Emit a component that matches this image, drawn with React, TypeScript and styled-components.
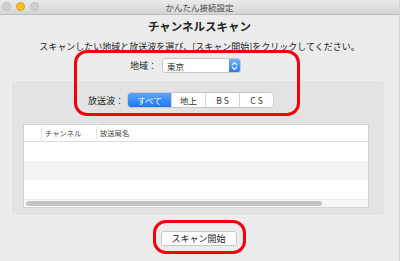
import React from "react";
import styled, { createGlobalStyle } from "styled-components";

const GlobalStyle = createGlobalStyle`
  html, body {
    margin: 0;
    padding: 0;
    background: #ececec;
    font-family: "Noto Sans CJK JP", "Noto Sans", sans-serif;
  }
`;

const waves = ["すべて", "地上", "B S", "C S"];

const App: React.FC = () => {
  return (
    <Window>
      <GlobalStyle />
      <TitleBar>
        <Lights>
          <Light />
          <Light $color="#fbbc2c" $border="#e0a21c" />
          <Light />
        </Lights>
        <WindowTitle>かんたん接続設定</WindowTitle>
      </TitleBar>
      <Heading>チャンネルスキャン</Heading>
      <Instruction>スキャンしたい地域と放送波を選び、[スキャン開始]をクリックしてください。</Instruction>
      <RegionRow>
        <Label>地域：</Label>
        <Select>
          <SelectText>東京</SelectText>
          <Stepper>
            <svg width="7" height="10" viewBox="0 0 7 10">
              <path d="M1 4 L3.5 1.5 L6 4 M1 6 L3.5 8.5 L6 6" stroke="#fff" strokeWidth="1.2" fill="none" />
            </svg>
          </Stepper>
        </Select>
      </RegionRow>
      <Panel>
        <WaveRow>
          <Label>放送波：</Label>
          <Segmented>
            {waves.map((w, i) => (
              <Segment key={w} $active={i === 0} $wide={i === 0}>
                {w}
              </Segment>
            ))}
          </Segmented>
        </WaveRow>
        <Table>
          <HeadRow>
            <HeadCell $width={17} />
            <HeadCell $width={55}>チャンネル</HeadCell>
            <HeadCell>放送局名</HeadCell>
          </HeadRow>
          <Row />
          <Row $alt />
          <Row />
          <ScrollArea>
            <Thumb />
          </ScrollArea>
        </Table>
      </Panel>
      <ButtonRow>
        <Button>スキャン開始</Button>
      </ButtonRow>
      <Mark style={{ left: 74, top: 50, width: 226, height: 66 }} />
      <Mark style={{ left: 153, top: 220, width: 93, height: 34 }} />
    </Window>
  );
};

export default App;

const Window = styled.div`
  position: relative;
  width: 400px;
  height: 261px;
  overflow: hidden;
  background: #ececec;
  display: flex;
  flex-direction: column;
  border-right: 1px solid #d6d6d6;
  box-sizing: border-box;
`;

const TitleBar = styled.div`
  height: 14px;
  position: relative;
  display: flex;
  align-items: center;
  justify-content: center;
  background: linear-gradient(#ebebeb, #d5d5d5);
  border-bottom: 1px solid #bdbdbd;
`;

const Lights = styled.div`
  position: absolute;
  left: 2px;
  top: 2px;
  display: flex;
  gap: 5px;
`;

const Light = styled.div<{ $color?: string; $border?: string }>`
  width: 9px;
  height: 9px;
  border-radius: 50%;
  box-sizing: border-box;
  background: ${(p) => p.$color || "#d0d0d0"};
  border: 1px solid ${(p) => p.$border || "#c2c2c2"};
`;

const WindowTitle = styled.div`
  font-size: 8.5px;
  color: #4a4a4a;
  line-height: 1;
`;

const Heading = styled.div`
  margin-top: 3px;
  height: 16px;
  text-align: center;
  font-size: 11.5px;
  font-weight: 700;
  color: #222;
  line-height: 16px;
`;

const Instruction = styled.div`
  margin-top: 6px;
  height: 14px;
  text-align: center;
  font-size: 9px;
  color: #222;
  line-height: 14px;
`;

const RegionRow = styled.div`
  margin-top: 4px;
  height: 15px;
  display: flex;
  align-items: center;
  padding-left: 130px;
`;

const Label = styled.div`
  font-size: 9px;
  color: #222;
  margin-right: 3px;
  line-height: 1;
`;

const Select = styled.div`
  margin-left: 2px;
  width: 79px;
  height: 15px;
  box-sizing: border-box;
  background: #fff;
  border: 1px solid #c9c9c9;
  border-radius: 3px;
  display: flex;
  align-items: center;
  justify-content: space-between;
  overflow: hidden;
`;

const SelectText = styled.span`
  font-size: 8.5px;
  color: #333;
  padding-left: 4px;
`;

const Stepper = styled.div`
  width: 11px;
  height: 100%;
  background: linear-gradient(#6fb2fb, #2a7cf4);
  display: flex;
  align-items: center;
  justify-content: center;
`;

const Panel = styled.div`
  margin: 8px 15px 0 12px;
  height: 134px;
  background: #e3e3e3;
  border-radius: 3px;
  display: flex;
  flex-direction: column;
  padding: 11px 15px 0 11px;
  box-sizing: border-box;
`;

const WaveRow = styled.div`
  height: 16px;
  display: flex;
  align-items: center;
  padding-left: 65px;
`;

const Segmented = styled.div`
  display: flex;
  height: 16px;
  margin-left: 0px;
  border: 1px solid #cacaca;
  border-radius: 4px;
  overflow: hidden;
  background: #fff;
  box-sizing: border-box;
`;

const Segment = styled.div<{ $active?: boolean; $wide?: boolean }>`
  width: ${(p) => (p.$wide ? 43 : 33)}px;
  display: flex;
  align-items: center;
  justify-content: center;
  font-size: 8.5px;
  color: ${(p) => (p.$active ? "#fff" : "#333")};
  background: ${(p) => (p.$active ? "linear-gradient(#5aa5fb, #1f76f2)" : "#fff")};
  border-right: 1px solid #d6d6d6;
  &:last-child {
    border-right: none;
  }
`;

const Table = styled.div`
  margin-top: 16px;
  height: 84px;
  background: #fff;
  border: 1px solid #d4d4d4;
  display: flex;
  flex-direction: column;
  box-sizing: border-box;
`;

const HeadRow = styled.div`
  height: 16px;
  display: flex;
  align-items: center;
  border-bottom: 1px solid #dcdcdc;
  flex-shrink: 0;
`;

const HeadCell = styled.div<{ $width?: number }>`
  width: ${(p) => (p.$width ? `${p.$width}px` : "auto")};
  flex: ${(p) => (p.$width ? "none" : "1")};
  height: 12px;
  display: flex;
  align-items: center;
  padding-left: 3px;
  box-sizing: border-box;
  font-size: 7.3px;
  color: #444;
  border-left: 1px solid #e4e4e4;
  &:first-child {
    border-left: none;
  }
`;

const Row = styled.div<{ $alt?: boolean }>`
  height: 19px;
  flex-shrink: 0;
  background: ${(p) => (p.$alt ? "#f3f3f3" : "#fff")};
`;

const ScrollArea = styled.div`
  flex: 1;
  background: #f7f7f7;
  border-top: 1px solid #ececec;
  display: flex;
  align-items: flex-end;
  padding: 0 0 1px 2px;
`;

const Thumb = styled.div`
  width: 296px;
  height: 5px;
  border-radius: 3px;
  background: #c4c4c4;
`;

const ButtonRow = styled.div`
  margin-top: 16px;
  display: flex;
  justify-content: center;
  padding-right: 2px;
`;

const Button = styled.div`
  width: 76px;
  height: 15px;
  box-sizing: border-box;
  background: #fff;
  border: 1px solid #c8c8c8;
  border-radius: 3px;
  display: flex;
  align-items: center;
  justify-content: center;
  font-size: 9px;
  color: #222;
`;

const Mark = styled.div`
  position: absolute;
  box-sizing: border-box;
  border: 3px solid #f2000c;
  border-radius: 13px;
  pointer-events: none;
`;
